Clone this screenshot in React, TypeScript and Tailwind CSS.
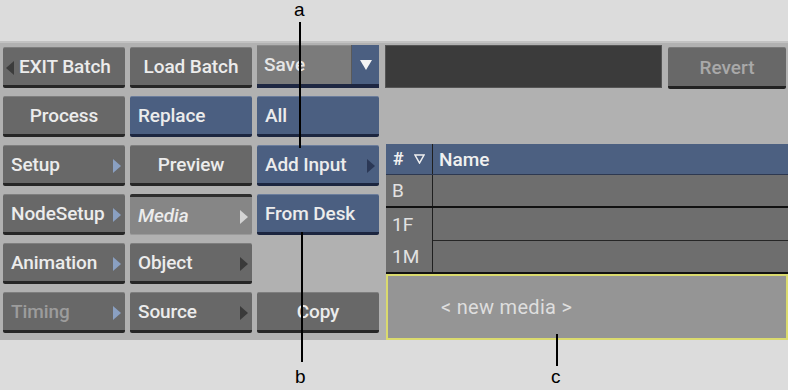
import React from "react";

type Arrow = "none" | "blue" | "dark" | "light" | "navy";

const arrowColor: Record<Arrow, string> = {
  none: "",
  blue: "#8aa0c2",
  dark: "#3a3a3a",
  light: "#d4d4d4",
  navy: "#2b3856",
};

function RightArrow({ kind }: { kind: Arrow }) {
  if (kind === "none") return null;
  return (
    <svg width="8" height="14" viewBox="0 0 8 14" className="absolute right-[4px] top-[13px]">
      <polygon points="0,0 8,7 0,14" fill={arrowColor[kind]} />
    </svg>
  );
}

function Btn({
  label,
  blue,
  align = "left",
  arrow = "none",
  textClass = "text-[#ececec]",
  pressed,
  italic,
  leftArrow,
}: {
  label?: string;
  blue?: boolean;
  align?: "left" | "center";
  arrow?: Arrow;
  textClass?: string;
  pressed?: boolean;
  italic?: boolean;
  leftArrow?: boolean;
}) {
  const base = pressed
    ? "bg-[#868686] border-t-[3px] border-t-[#2e2e2e] border-b-[1px] border-b-[#9a9a9a]"
    : blue
    ? "bg-[#4b5f81] border-t-[1px] border-t-[#6b7d9c] border-b-[3px] border-b-[#1c2640]"
    : "bg-[#686868] border-t-[1px] border-t-[#7e7e7e] border-b-[3px] border-b-[#262626]";
  return (
    <div
      className={`relative h-[41px] rounded-[2px] flex items-center ${base} ${
        align === "center" ? "justify-center" : "pl-[8px]"
      }`}
    >
      {leftArrow && (
        <svg width="8" height="14" viewBox="0 0 8 14" className="absolute left-[3px] top-[13px]">
          <polygon points="8,0 0,7 8,14" fill="#3c3c3c" />
        </svg>
      )}
      {label && (
        <span
          className={`text-[19px] font-medium leading-none tracking-[-0.1px] ${textClass} ${
            italic ? "italic" : ""
          } ${leftArrow ? "ml-[8px]" : ""}`}
        >
          {label}
        </span>
      )}
      <RightArrow kind={arrow} />
    </div>
  );
}

export default function App() {
  return (
    <div
      className="relative w-[788px] h-[390px] overflow-hidden bg-[#dcdcdc]"
      style={{ fontFamily: "Roboto, 'Liberation Sans', sans-serif" }}
    >
      <div className="h-[41px]" />
      <div className="h-[299px] bg-[#b1b1b1] border-t-[2px] border-t-[#c2c2c2] flex">
        {/* button grid */}
        <div className="pl-[3px] pt-[4px] grid grid-cols-[122px_122px_122px] grid-rows-[41px_41px_41px_41px_41px_41px] gap-x-[5px] gap-y-[8px] w-[379px] shrink-0">
          <Btn label="EXIT Batch" leftArrow />
          <Btn label="Load Batch" align="center" />
          <div className="-mt-[2px] h-[43px] flex flex-col">
            <div className="flex flex-1">
              <div className="flex-1 bg-[#7b7b7b] border-t-[1px] border-t-[#8a8a8a] flex items-center pl-[7px]">
                <span className="text-[19px] font-medium leading-none text-[#e6e6e6] -mt-[2px]">Save</span>
              </div>
              <div className="w-[1px] bg-[#5a5a5a]" />
              <div className="w-[27px] bg-[#4b5f81] flex items-center justify-center">
                <svg width="12" height="10" viewBox="0 0 12 10">
                  <polygon points="0,0 12,0 6,10" fill="#f4f4f4" />
                </svg>
              </div>
            </div>
            <div className="h-[4px] bg-[#1e2742]" />
          </div>

          <Btn label="Process" align="center" />
          <Btn label="Replace" blue />
          <Btn label="All" blue />

          <Btn label="Setup" arrow="blue" />
          <Btn label="Preview" align="center" />
          <Btn label="Add Input" blue arrow="navy" />

          <Btn label="NodeSetup" arrow="blue" />
          <Btn label="Media" pressed italic arrow="light" />
          <Btn label="From Desk" blue />

          <Btn label="Animation" arrow="blue" />
          <Btn label="Object" arrow="dark" />
          <div />

          <Btn label="Timing" arrow="blue" textClass="text-[#9c9c9c]" />
          <Btn label="Source" arrow="dark" />
          <Btn label="Copy" align="center" />
        </div>

        {/* right side */}
        <div className="ml-[6px] flex-1 flex flex-col pt-[2px]">
          <div className="flex">
            <div className="w-[277px] h-[43px] bg-[#3b3b3b] border border-[#555555]" />
            <div className="ml-[6px] mt-[2px] w-[118px] h-[42px] bg-[#686868] border-t-[1px] border-t-[#7a7a7a] border-b-[3px] border-b-[#222222] rounded-[2px] flex items-center justify-center">
              <span className="text-[19px] font-medium leading-none text-[#a9a9a9]">Revert</span>
            </div>
          </div>

          {/* table */}
          <div className="ml-[1px] mt-[55px] w-[402px] flex flex-col">
            <div className="flex h-[31px] bg-[#4c6081] border-b-[1px] border-b-[#2d3850]">
              <div className="w-[47px] flex items-center pl-[7px] gap-[10px] border-r-[1px] border-r-[#1f1f1f]">
                <span className="text-[18px] font-bold leading-none text-[#f0f0f0]">#</span>
                <svg width="11" height="10" viewBox="0 0 11 10">
                  <polygon points="1,1 10,1 5.5,9" fill="none" stroke="#f0f0f0" strokeWidth="1.5" />
                </svg>
              </div>
              <div className="flex-1 flex items-center pl-[6px]">
                <span className="text-[19px] font-medium leading-none text-[#f0f0f0]">Name</span>
              </div>
            </div>
            <div className="flex h-[31px] bg-[#6e6e6e]">
              <div className="w-[47px] flex items-center pl-[6px] border-r-[1px] border-r-[#1f1f1f]">
                <span className="text-[19px] leading-none text-[#e2e2e2]">B</span>
              </div>
              <div className="flex-1" />
            </div>
            <div className="h-[2px] bg-[#111111]" />
            <div className="flex h-[64px] bg-[#6e6e6e]">
              <div className="w-[47px] flex flex-col border-r-[1px] border-r-[#1f1f1f]">
                <div className="h-[32px] flex items-center pl-[6px]">
                  <span className="text-[19px] leading-none text-[#e2e2e2]">1F</span>
                </div>
                <div className="h-[32px] flex items-center pl-[6px]">
                  <span className="text-[19px] leading-none text-[#e2e2e2]">1M</span>
                </div>
              </div>
              <div className="flex-1 flex flex-col">
                <div className="h-[32px]" />
                <div className="h-[1px] bg-[#262626]" />
                <div className="flex-1" />
              </div>
            </div>
            <div className="h-[2px] bg-[#111111]" />
            <div className="h-[66px] bg-[#959595] border-[2px] border-[#dada6e] flex items-center pl-[53px]">
              <span className="text-[20px] leading-none tracking-[0.3px] text-[#dedede]">
                &lt; new media &gt;
              </span>
            </div>
          </div>
        </div>
      </div>

      {/* annotations */}
      <span
        className="absolute left-[294px] top-[0px] text-[19px] leading-[20px] text-black"
        style={{ fontFamily: "'Liberation Sans', Arial, sans-serif" }}
      >
        a
      </span>
      <div className="absolute left-[299px] top-[22px] w-[2px] h-[126px] bg-black" />
      <div className="absolute left-[301px] top-[232px] w-[2px] h-[130px] bg-black" />
      <span
        className="absolute left-[295px] top-[367px] text-[19px] leading-[20px] text-black"
        style={{ fontFamily: "'Liberation Sans', Arial, sans-serif" }}
      >
        b
      </span>
      <div className="absolute left-[556px] top-[334px] w-[2px] h-[32px] bg-black" />
      <span
        className="absolute left-[551px] top-[367px] text-[19px] leading-[20px] text-black"
        style={{ fontFamily: "'Liberation Sans', Arial, sans-serif" }}
      >
        c
      </span>
    </div>
  );
}
